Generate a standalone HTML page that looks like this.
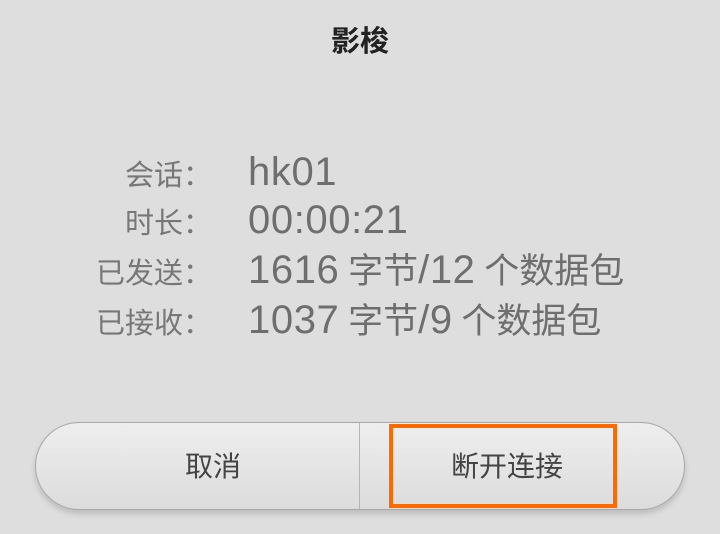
<!DOCTYPE html>
<html><head><meta charset="utf-8"><style>
html,body{margin:0;padding:0}
body{width:720px;height:534px;background:#dedede;position:relative;overflow:hidden;font-family:"Liberation Sans","Noto Sans CJK SC",sans-serif}
.t{position:absolute;top:22px;left:0;width:720px;text-align:center;font-size:29px;font-weight:bold;color:#222;line-height:40px}
.row{position:absolute;left:0;width:720px;height:50px}
.l{position:absolute;right:508px;font-size:29px;color:#777;line-height:50px;top:4px;white-space:nowrap}
.v{position:absolute;left:248px;font-size:40px;letter-spacing:0.6px;word-spacing:-3px;color:#6e6e6e;line-height:50px;white-space:nowrap}
.v i{font-style:normal;font-size:35px;letter-spacing:0}
.btn{position:absolute;left:35px;top:422px;width:650px;height:88px;border-radius:44px;background:linear-gradient(#eeeeee,#dcdcdc);border:1px solid #a8a8a8;box-sizing:border-box;box-shadow:0 4px 6px rgba(0,0,0,.15)}
.div{position:absolute;left:359px;top:423px;width:1px;height:86px;background:#b5b5b5}
.bt{position:absolute;top:445px;font-size:28px;color:#444;line-height:44px;text-align:center}
.or{position:absolute;left:389px;top:424px;width:228px;height:84px;border:4px solid #ff6a00;box-sizing:border-box}
</style></head><body>
<div class="t">影梭</div>
<div class="row" style="top:147px"><span class="l">会话：</span><span class="v">hk01</span></div>
<div class="row" style="top:195px"><span class="l">时长：</span><span class="v">00:00:21</span></div>
<div class="row" style="top:245px"><span class="l">已发送：</span><span class="v">1616 <i>字节</i>/12 <i>个数据包</i></span></div>
<div class="row" style="top:295px"><span class="l">已接收：</span><span class="v">1037 <i>字节</i>/9 <i>个数据包</i></span></div>
<div class="btn"></div>
<div class="div"></div>
<div class="bt" style="left:66px;width:294px">取消</div>
<div class="bt" style="left:393px;width:228px">断开连接</div>
<div class="or"></div>
</body></html>
